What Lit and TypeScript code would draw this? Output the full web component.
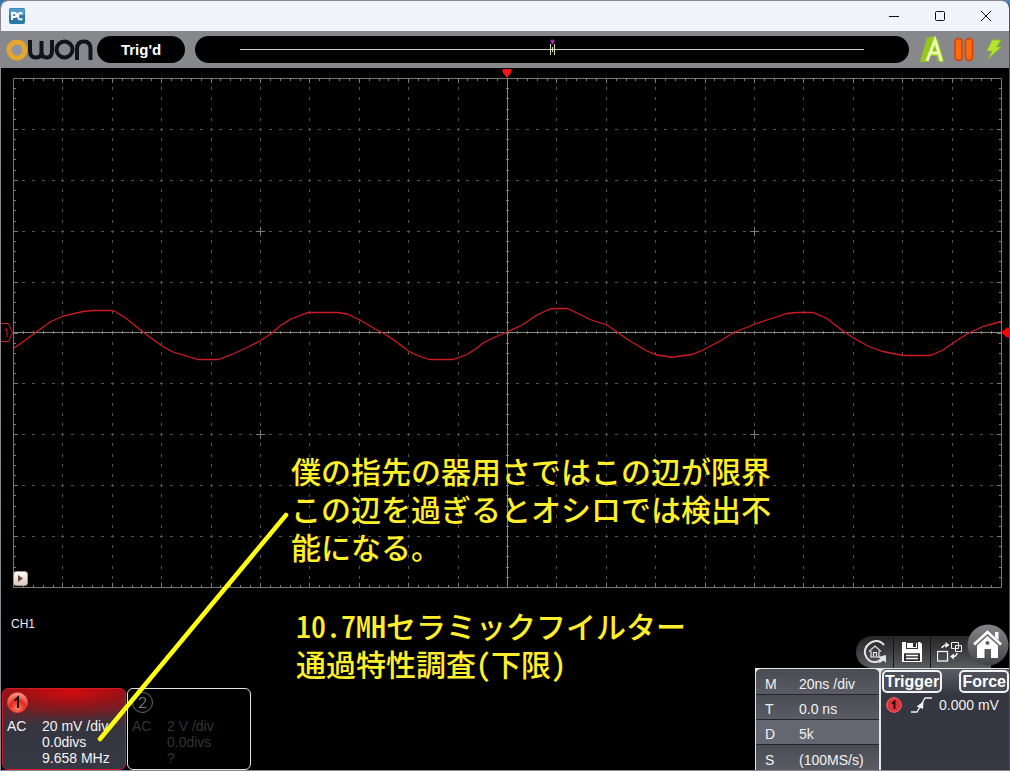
import { LitElement, html, svg, css } from "lit";
import { customElement, property } from "lit/decorators.js";

/* Graticule geometry, in screen units */
const LEFT = 13;
const TOP = 78;
const COLS = 20;
const ROWS = 10;
const DIV_X = 49.4;
const DIV_Y = 50.9;
const RIGHT = 1001;
const BOTTOM = 587;
const MID_X = 507;
const MID_Y = 332;

const colX = (n: number) => Math.round(LEFT + n * DIV_X);
const rowY = (n: number) => Math.round(TOP + n * DIV_Y);

const TRACE: [number, number][] = [
  [14, 348], [20, 344], [35, 333], [50, 322], [63, 316], [83, 311.5], [93, 310.5], [112, 310.5],
  [116, 312], [127, 319], [143, 332], [162, 346], [173, 352], [187, 356], [198, 359.5], [218, 359.5],
  [233, 354], [247, 347.5], [260, 341], [272, 333], [280, 326], [290, 319.5], [308, 312.5], [338, 312.5],
  [347, 314], [360, 320], [375, 329], [383, 333], [393, 339.5], [410, 352], [420, 356.5], [430, 359.5],
  [453, 359.5], [467, 354.5], [477, 348], [483, 343], [495, 337], [507, 332], [522, 325], [537, 315],
  [550, 309], [557, 308.5], [567, 308.5], [577, 313], [590, 319.5], [607, 325], [617, 332], [630, 341],
  [647, 351], [657, 355], [668, 356.5], [672, 357.5], [677, 356.5], [692, 354.5], [703, 350], [720, 341],
  [733, 333], [755, 324], [770, 319], [787, 313.5], [797, 312.5], [813, 312.5], [827, 318.5], [843, 331],
  [857, 340], [870, 347], [883, 351.5], [903, 355.5], [930, 355.5], [943, 350], [953, 343], [967, 334],
  [983, 326.5], [1001, 321.5],
];

function gridPath(): string {
  let d = "";
  for (let c = 1; c < COLS; c++) {
    if (c === COLS / 2) continue;
    for (let k = 1; k < ROWS * 5; k++) {
      d += `M${colX(c) + 0.5} ${Math.round(TOP + (k * DIV_Y) / 5) - 1}v3`;
    }
  }
  for (let r = 1; r < ROWS; r++) {
    if (r === ROWS / 2) continue;
    for (let k = 1; k < COLS * 5; k++) {
      d += `M${Math.round(LEFT + (k * DIV_X) / 5) - 1} ${rowY(r) + 0.5}h3`;
    }
  }
  return d;
}

function tickPath(): string {
  let d = "";
  for (let k = 1; k < COLS * 5; k++) {
    const x = Math.round(LEFT + (k * DIV_X) / 5) + 0.5;
    const n = k % 5 === 0 ? 4 : 2;
    d += `M${x} ${TOP}v${n + 1}M${x} ${BOTTOM + 1}v-${n + 1}M${x} ${MID_Y - 1}v3`;
  }
  for (let k = 1; k < ROWS * 5; k++) {
    const y = Math.round(TOP + (k * DIV_Y) / 5) + 0.5;
    const n = k % 5 === 0 ? 4 : 2;
    d += `M${LEFT} ${y}h${n + 1}M${RIGHT + 1} ${y}h-${n + 1}M${MID_X - 1} ${y}h3`;
  }
  for (const c of [5, 15]) {
    for (const r of [3, 7]) {
      const x = colX(c);
      const y = rowY(r);
      d += `M${x - 4} ${y + 0.5}h9M${x + 0.5} ${y - 4}v9`;
    }
  }
  return d;
}

@customElement("scope-screen")
class ScopeScreen extends LitElement {
  static styles = css`
    :host { display: block; position: relative; }
    .plot { display: block; width: 100%; height: auto; }
    .play {
      position: absolute; left: 12px; bottom: 15px; width: 15px; height: 15px; padding: 0;
      display: grid; place-items: center; border: 1px solid #a98f86; border-radius: 3px;
      background: linear-gradient(#fffaf6, #d8cbc4);
    }
  `;
  render() {
    const pts = TRACE.map((p) => p.join(",")).join(" ");
    return html`
      <svg class="plot" viewBox="1 68 1008 533" role="img" aria-label="Channel 1 waveform">
        <path d=${gridPath()} stroke="#55554f" fill="none" />
        <path d=${tickPath()} stroke="#7c7c72" fill="none" />
        <path d="M13.5 78.5H1001.5V587.5H13.5Z" stroke="#77776c" fill="none" />
        <path d="M13 332.5H1001M507.5 78V587" stroke="#85857d" fill="none" />
        <polyline points=${pts} fill="none" stroke="#d01a24" stroke-width="1.3" />
        <path d="M502.5 69H511.5V72L507 78L502.5 72Z" fill="#f5131a" />
        <path d="M1001 332.5L1007 327.5H1009V337.5H1007Z" fill="#ff0000" />
        <path d="M1 323.5H8.5L12.5 332.5L8.5 341.5H1" fill="none" stroke="#d3202a" />
        <path d="M4.5 330.5L7 328.5V337" fill="none" stroke="#d3202a" />
      </svg>
      <button class="play" aria-label="Show panel">
        <svg width="7" height="7" viewBox="0 0 7 7"><path d="M1 0L6 3.5L1 7Z" fill="#6b4a42" /></svg>
      </button>
    `;
  }
}

@customElement("channel-card")
class ChannelCard extends LitElement {
  @property({ type: Number }) number = 1;
  @property({ type: Boolean }) active = false;
  @property() coupling = "AC";
  @property({ attribute: false }) readings: string[] = [];

  static styles = css`
    :host { display: block; flex: none; width: 124px; }
    .card {
      box-sizing: border-box; height: 82px; padding: 2px 4px 3px; border: 1px solid #e4e4e4;
      border-radius: 6px; color: #343434; display: flex; flex-direction: column;
      justify-content: space-between; background: #000;
    }
    .active {
      color: #f4f4f4; border-color: #d01a26;
      background:
        radial-gradient(ellipse 90px 30px at 56% 0, #d80a0a, #a0101499 60%, transparent),
        linear-gradient(#97131b, #6b2029 22%, #34353f 48%, #363844);
    }
    .badge { display: block; margin-left: -1px; }
    .data { display: grid; grid-template-columns: 35px 1fr; line-height: 16px; white-space: nowrap; }
    .list { margin: 0; padding: 0; list-style: none; }
  `;
  render() {
    return html`
      <section class="card ${this.active ? "active" : ""}" aria-label="Channel ${this.number}">
        <svg class="badge" width="23" height="23" viewBox="0 0 23 23">
          ${this.active
            ? svg`<defs><radialGradient id="g" cx=".5" cy=".8" r=".8"><stop offset="0" stop-color="#ff8062"/><stop offset=".5" stop-color="#e3281f"/><stop offset="1" stop-color="#ffb0a0"/></radialGradient></defs>
              <circle cx="11.5" cy="11.5" r="10" fill="url(#g)" stroke="#f2402e"/>
              <path d="M8.5 9.5L12 6.5V17" fill="none" stroke="#160505" stroke-width="2"/>`
            : svg`<circle cx="11.5" cy="11.5" r="10" fill="none" stroke="#6c6c6c"/>
              <path d="M8.5 9Q8.5 6.5 11.5 6.5Q14.5 6.5 14.5 9Q14.5 11 8.5 16.5H15" fill="none" stroke="#777" stroke-width="1.2"/>`}
        </svg>
        <div class="data">
          <span>${this.coupling}</span>
          <ul class="list">${this.readings.map((r) => html`<li>${r}</li>`)}</ul>
        </div>
      </section>
    `;
  }
}

@customElement("app-root")
class AppRoot extends LitElement {
  private timebase = [
    ["M", "20ns /div"],
    ["T", "0.0 ns"],
    ["D", "5k"],
    ["S", "(100MS/s)"],
  ];

  static styles = css`
    :host {
      display: block; background: linear-gradient(90deg, #2d78b4, #4a3d4a 40%, #46424e 70%, #3f88c4);
      font: 14px/16px "Liberation Sans", Arial, sans-serif;
    }
    button { font: inherit; color: inherit; padding: 0; border: 0; background: none; display: grid; place-items: center; }
    .window {
      box-sizing: border-box; min-height: 100vh; position: relative; display: flex; flex-direction: column;
      border: 1px solid #8b8790; border-right-color: #3f5468; border-radius: 8px 8px 0 0; overflow: hidden; background: #000;
    }
    .titlebar { display: flex; align-items: center; justify-content: space-between; height: 30px; padding-left: 8px; background: #f1f4fa; }
    .controls { display: flex; }
    .control { width: 46px; height: 30px; }
    .bar { display: flex; align-items: center; height: 37px; padding: 0 3px 0 4px; background: #87888c; }
    .logo { flex: none; margin-right: 4px; }
    .status {
      flex: none; width: 88px; line-height: 27px; border-radius: 14px; background: #000; color: #fff;
      text-align: center; font-size: 15px; font-weight: bold;
    }
    .memory { flex: 1; height: 27px; margin: 0 10px; border-radius: 14px; background: #000; display: flex; align-items: center; justify-content: center; }
    .line { width: 100%; height: 27px; margin: 0 45px; }
    .modes { flex: none; display: flex; align-items: center; }
    .footer { flex: 1; display: flex; justify-content: space-between; align-items: stretch; }
    .left { display: flex; flex-direction: column; justify-content: space-between; }
    .source { margin: 0; padding: 15px 0 0 10px; font-size: 12px; color: #eee; }
    .channels { display: flex; gap: 1px; padding-left: 1px; }
    .right { display: flex; flex-direction: column; justify-content: flex-end; align-items: flex-end; }
    .tools { display: flex; align-items: flex-end; height: 44px; }
    .strip {
      display: flex; height: 32px; margin-right: -24px; padding-right: 24px; border-radius: 16px 0 0 16px;
      background: linear-gradient(#262626, #39393b 40%, #5a5b5d);
    }
    .tool { width: 37px; height: 32px; }
    .tool + .tool { border-left: 1px solid #161616; }
    .home { width: 42px; height: 44px; position: relative; }
    .panels { display: flex; gap: 2px; background: #e6e6ea; padding: 1px 0 0 1px; }
    .timebase { width: 123px; margin: 0; padding-top: 1px; border-radius: 5px 5px 0 0; background: #474952; color: #f2f2f2; overflow: hidden; }
    .row { display: grid; grid-template-columns: 34px 1fr; align-items: center; height: 25px; padding: 4px 0 0 9px; box-sizing: border-box; border-bottom: 1px solid #24262c; background: linear-gradient(#4a4c54, #5a5c65); }
    .row:last-child { border-bottom: 0; }
    .row.sel { background: #646671; }
    .value { margin: 0; }
    .trigger { width: 128px; background: linear-gradient(#5a5c66, #343640 26%, #353743); color: #f2f2f2; display: flex; flex-direction: column; gap: 4px; border-radius: 5px 0 0 0; }
    .actions { display: flex; justify-content: space-between; padding: 1px 0 0 1px; }
    .action { height: 23px; padding: 0 1px; border: 2px solid #f3f3f3; border-radius: 5px; font-size: 16px; font-weight: bold; background: #4c4e58; color: #fff; }
    .edge { display: flex; align-items: center; padding-left: 5px; white-space: nowrap; }
    .slope { margin: 0 6px 0 9px; }
    .note {
      position: absolute; margin: 0; color: #ffee2a; white-space: pre-line;
      font: 500 30px/38px "Noto Sans CJK JP", sans-serif; font-feature-settings: "hwid";
    }
    .comment { left: 290px; top: 450px; }
    .subject { left: 295px; top: 605px; }
    .pointer { position: absolute; left: 94px; top: 508px; pointer-events: none; }
  `;

  render() {
    return html`
      <main class="window">
        <header class="titlebar">
          <svg width="16" height="16" viewBox="0 0 16 16" role="img" aria-label="PC">
            <rect width="16" height="16" rx="2" fill="#2a78a8" />
            <rect x=".5" y=".5" width="15" height="7" rx="2" fill="#559cc4" />
            <path d="M3 12V5H5.5Q7.5 5 7.5 7Q7.5 9 5.5 9H3.5M13.5 5.5Q9 4 9 8.3Q9 12.5 13.5 11" fill="none" stroke="#fff" stroke-width="2" />
          </svg>
          <nav class="controls">
            <button class="control" aria-label="Minimize"><svg width="10" height="10" viewBox="0 0 10 10"><path d="M0 5.5H10" stroke="#111" /></svg></button>
            <button class="control" aria-label="Maximize"><svg width="10" height="10" viewBox="0 0 10 10"><rect x=".5" y=".5" width="9" height="9" rx="1" fill="none" stroke="#111" /></svg></button>
            <button class="control" aria-label="Close"><svg width="10" height="10" viewBox="0 0 10 10"><path d="M0 0L10 10M10 0L0 10" stroke="#111" /></svg></button>
          </nav>
        </header>

        <div class="bar">
          <svg class="logo" width="88" height="24" viewBox="0 0 88 24" role="img" aria-label="OWON">
            <circle cx="12" cy="12" r="8" fill="#8d93a0" stroke="#e6a62c" stroke-width="5" />
            <g fill="none" stroke="#10151a" stroke-width="4">
              <path d="M25 2V13Q25 19.5 31 19.5Q36.500 19.500 36.500 14V3M36.500 14Q36.500 19.500 42 19.500Q47 19.500 47 13V2" />
              <circle cx="59.5" cy="11.500" r="8" />
              <path d="M72 22V11Q72 3.5 79 3.5Q85.5 3.5 85.5 11V22" />
            </g>
          </svg>
          <output class="status">Trig'd</output>
          <div class="memory">
            <svg class="line" viewBox="0 0 624 27" preserveAspectRatio="xMidYMid meet" role="img" aria-label="Trigger position">
              <path d="M0 13.5H624" stroke="#cfcfc4" />
              <path d="M310.5 8V19M312.5 11V16M314.5 8V19" stroke="#d9dbb0" />
              <path d="M311 4H314V6L312.5 8L311 6Z" fill="#b53ac0" stroke="#8d2299" />
            </svg>
          </div>
          <div class="modes">
            <button aria-label="Auto set">
              <svg width="26" height="30" viewBox="0 0 26 30">
                <path d="M2 27L9 3L14 2L9 27Z" fill="#5f9410" />
                <path d="M8 3L14 1L19 5L25 27H19L17.5 21H11L8 27H1Z" fill="#96c81c" />
                <path d="M8 26L16 5L22.5 26M11 18H20" fill="none" stroke="#edf7b4" stroke-width="3" />
              </svg>
            </button>
            <button aria-label="Run or stop">
              <svg width="36" height="30" viewBox="0 0 36 30">
                <g fill="#ff6c0b" stroke="#d93c0b" stroke-width="1.5">
                  <rect x="10" y="3.5" width="7" height="22" rx="3.5" /><rect x="20.500" y="3.5" width="7" height="22" rx="3.5" />
                </g>
              </svg>
            </button>
            <button aria-label="Single trigger">
              <svg width="25" height="30" viewBox="0 0 25 30">
                <path d="M11 5H20L15.500 12H20L7 24L11 16H6Z" fill="#b5e62d" stroke="#8abf25" />
              </svg>
            </button>
          </div>
        </div>

        <scope-screen></scope-screen>

        <footer class="footer">
          <div class="left">
            <p class="source">CH1</p>
            <div class="channels">
              <channel-card .number=${1} active .readings=${["20 mV /div", "0.0divs", "9.658 MHz"]}></channel-card>
              <channel-card .number=${2} .readings=${["2 V /div", "0.0divs", "?"]}></channel-card>
            </div>
          </div>
          <div class="right">
            <div class="tools">
              <div class="strip">
                <button class="tool" aria-label="Restore">
                  <svg width="24" height="26" viewBox="0 0 24 26" fill="none" stroke="#e4e4e4" stroke-width="1.4">
                    <path d="M21 6Q16 0 9 3Q1 7 2 15Q5 24 13 23Q17 22 19 19" stroke-width="2" />
                    <path d="M6 12.500L12 7L18 12.500M8 12V18H16V12M10.5 18V13.5H13.5V18" stroke-width="1.2" />
                    <path d="M15 18L23 16V24L20.5 21.5Q18 24 14 24Q17 22 18 20Z" fill="#e4e4e4" stroke="none" />
                  </svg>
                </button>
                <button class="tool" aria-label="Save">
                  <svg width="20" height="20" viewBox="0 0 20 20">
                    <path d="M0 0H18L20 2V20H0Z" fill="#fff" />
                    <path d="M4 0V7H16V0M2 10H18V19H2Z" fill="#333" /><rect x="5" y="1" width="10" height="5" fill="#fff" /><rect x="11" y="1" width="3" height="4" fill="#333" />
                    <path d="M2 10.5H18M4 13.5H16M4 16.5H16" stroke="#fff" stroke-width="1.3" />
                  </svg>
                </button>
                <button class="tool" aria-label="Switch channels">
                  <svg width="25" height="22" viewBox="0 0 25 22" fill="none" stroke="#f5f5f5">
                    <rect x=".5" y="10.5" width="10" height="9.5" stroke-width="1.3" />
                    <path d="M14.5 1.5H21.5V7.5H14.5ZM18.5 4.5H24.5V10.5H18.5Z" />
                    <path d="M5 7Q6 4 10 4" stroke-width="1.6" /><path d="M8.5 1L12.5 4L8.5 7Z" fill="#f5f5f5" stroke="none" />
                    <path d="M20 12Q19.5 15.5 16 15.5" stroke-width="1.6" /><path d="M17 12.5L13 15.5L17 18.5Z" fill="#f5f5f5" stroke="none" />
                  </svg>
                </button>
              </div>
              <button class="home" aria-label="Home">
                <svg width="42" height="44" viewBox="0 0 42 44">
                  <defs><linearGradient id="hg" x2="0" y2="1"><stop stop-color="#858587" /><stop offset="1" stop-color="#434446" /></linearGradient></defs>
                  <circle cx="21" cy="21" r="20.5" fill="url(#hg)" />
                  <path d="M7 20.5L20.5 8L34 20.5" fill="none" stroke="#fff" stroke-width="2.5" />
                  <path d="M28 8H31.5V16L28 13Z" fill="#fff" />
                  <path d="M20.5 12L31 21.5V34H24V25H17.5V34H10V21.5Z" fill="#fff" /><circle cx="20.5" cy="19" r="2" fill="#606164" />
                </svg>
              </button>
            </div>
            <div class="panels">
              <dl class="timebase">
                ${this.timebase.map(
                  ([k, v]) => html`<div class="row ${k === "D" ? "sel" : ""}"><dt>${k}</dt><dd class="value">${v}</dd></div>`
                )}
              </dl>
              <section class="trigger" aria-label="Trigger settings">
                <div class="actions">
                  <button class="action">Trigger</button>
                  <button class="action">Force</button>
                </div>
                <div class="edge">
                  <svg width="16" height="16" viewBox="0 0 16 16" role="img" aria-label="Channel 1">
                    <circle cx="8" cy="8" r="7.3" fill="#e0303a" stroke="#ff6a62" /><path d="M6 6.5L8.5 4.5V12" fill="none" stroke="#160505" stroke-width="1.8" />
                  </svg>
                  <svg class="slope" width="22" height="16" viewBox="0 0 22 16" role="img" aria-label="Rising edge">
                    <path d="M0 15H6L14 1H21" fill="none" stroke="#f2f2f2" stroke-width="1.3" /><path d="M5.5 9.5L12.5 4.5L12 12Z" fill="#f2f2f2" />
                  </svg>
                  <span>0.000 mV</span>
                </div>
              </section>
            </div>
          </div>
        </footer>

        <svg class="pointer" width="198" height="238" viewBox="0 0 198 238" aria-hidden="true">
          <path d="M5 230L191 6" stroke="#ffff10" stroke-width="4.5" stroke-linecap="round" />
        </svg>
        <p class="note comment">僕の指先の器用さではこの辺が限界
この辺を過ぎるとオシロでは検出不
能になる。</p>
        <p class="note subject">10.7MHセラミックフイルター
通過特性調査(下限)</p>
      </main>
    `;
  }
}
